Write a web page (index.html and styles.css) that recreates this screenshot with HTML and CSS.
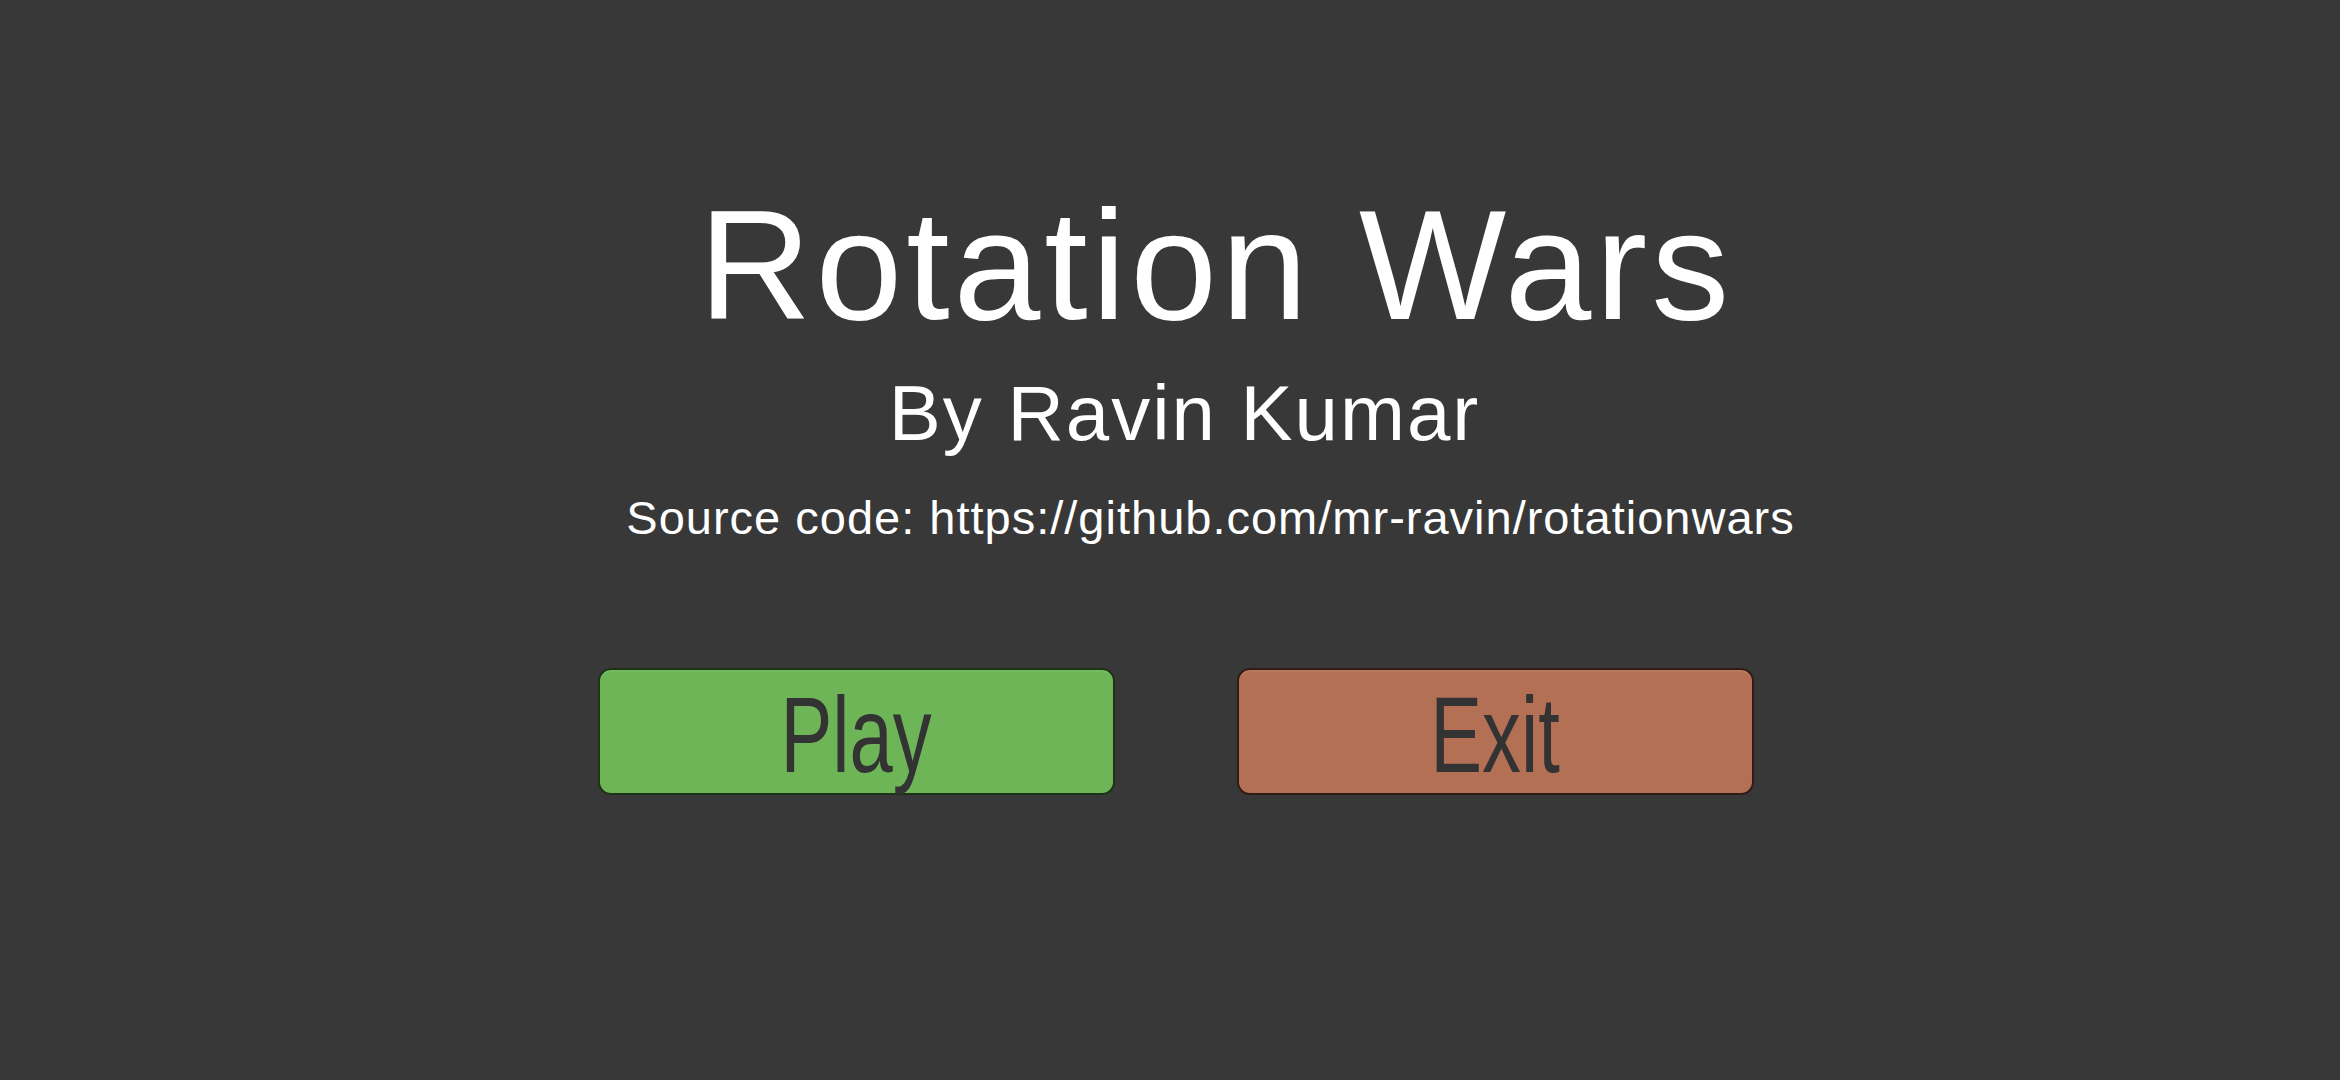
FILE: index.html
```html
<!DOCTYPE html>
<html lang="en">
<head>
<meta charset="utf-8">
<title>Rotation Wars</title>
<link rel="stylesheet" href="styles.css">
</head>
<body>
<main class="menu">
  <h1 class="title">Rotation Wars</h1>
  <p class="author">By Ravin Kumar</p>
  <p class="source">Source code: https://github.com/mr-ravin/rotationwars</p>
  <div class="buttons">
    <button class="btn btn-play"><span class="btn-label">Play</span></button>
    <button class="btn btn-exit"><span class="btn-label">Exit</span></button>
  </div>
</main>
</body>
</html>
```

FILE: styles.css
```css
html, body {
  margin: 0;
  padding: 0;
  width: 2340px;
  height: 1080px;
  background: #383838;
  overflow: hidden;
}

.menu {
  display: flex;
  flex-direction: column;
  align-items: center;
  padding-top: 187px;
  font-family: "Liberation Sans", Arial, sans-serif;
  color: #ffffff;
}

.title {
  margin: 0;
  font-size: 156px;
  font-weight: normal;
  line-height: 156px;
  letter-spacing: 4px;
  padding-left: 92px;
  white-space: nowrap;
}

.author {
  margin: 31px 0 0 0;
  font-size: 78px;
  line-height: 78px;
  letter-spacing: 2px;
  padding-left: 29px;
  white-space: nowrap;
}

.source {
  margin: 42px 0 0 0;
  font-size: 47px;
  line-height: 47px;
  letter-spacing: 1px;
  padding-left: 81px;
  white-space: nowrap;
}

.buttons {
  display: flex;
  gap: 122px;
  margin-top: 127px;
  padding-left: 11px;
}

.btn {
  box-sizing: border-box;
  width: 517px;
  height: 127px;
  border-radius: 13px;
  border: 2px solid #1c2a17;
  display: flex;
  align-items: center;
  justify-content: center;
  padding: 0;
  cursor: pointer;
  box-shadow: inset 0 2px 0 rgba(255, 255, 255, 0.06);
}

.btn-play {
  background: #6db557;
  border-color: #1d3318;
}

.btn-exit {
  background: #b47055;
  border-color: #2e1c15;
}

.btn-label {
  display: inline-block;
  font-family: "Liberation Sans", Arial, sans-serif;
  font-size: 108px;
  line-height: 108px;
  color: #333333;
  transform: scaleX(0.72);
  margin-top: 6px;
}
```
